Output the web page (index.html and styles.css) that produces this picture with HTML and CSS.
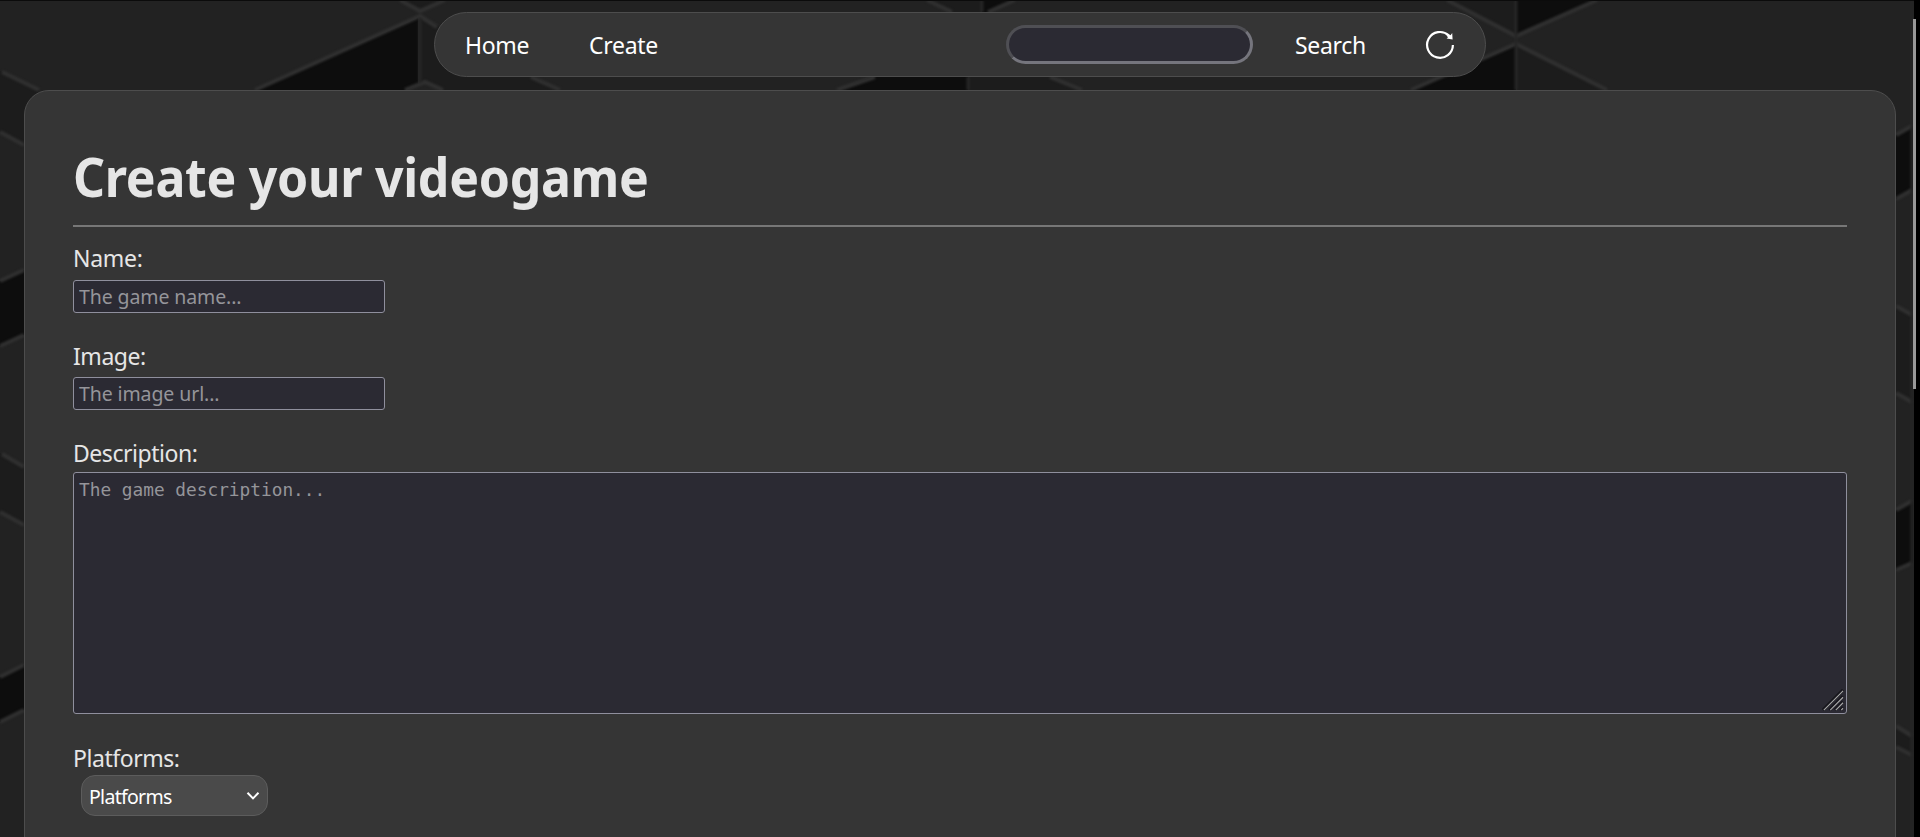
FILE: index.html
```html
<!DOCTYPE html>
<html lang="en">
<head>
<meta charset="utf-8">
<title>Create your videogame</title>
<link rel="stylesheet" href="styles.css">
</head>
<body>
<svg class="backdrop" viewBox="0 0 1920 837" aria-hidden="true">
  <rect width="1920" height="837" fill="#222"/>
  <g fill="#1c1c1c">
    <path d="M0 71L39 90V152L0 132zM0 453L24 466V525L0 512zM1896 306L1913 315V402L1896 393zM1896 726L1913 736V755L1896 747z"/>
    <path d="M400 0H445L420 11zM420 16L560 90H443L425 82L420 85zM927 0H982V30zM968 70H1035L1082 90H968zM1447 0H1515V36zM1517 44L1607 90H1517z"/>
  </g>
  <g fill="#0d0d0d">
    <path d="M0 281L24 270V335L0 346zM0 677L24 665V710L0 722zM1896 135L1913 126V190L1896 199zM1896 510L1913 501V563L1896 570z"/>
    <path d="M255 90L418 18V85L408 90zM837 90L890 70H968V90zM982 0H1015L982 15zM1516 0H1597L1516 36zM1411 90L1516 45V90z"/>
  </g>
  <g class="seams">
    <path d="M2 72L39 90M0 132L24 145M0 281L24 270M0 346L24 335M2 454L24 467M0 512L24 525M0 677L24 665M0 722L24 710"/>
    <path d="M1896 135L1912 126M1896 199L1912 190M1896 306L1912 315M1896 393L1912 402M1896 510L1912 501M1896 570L1912 563M1896 726L1912 736M1896 747L1912 755"/>
    <path d="M255 90L420 16L437 27M400 0L420 11L445 0M405 90L425 82L443 90M531 77L560 90M837 90L875 77M1050 77L1082 90M927 0L952 12M1015 0L988 12M1447 0L1516 36L1597 0M1411 90L1516 44L1607 90"/>
  </g>
  <path class="uprights" d="M420 18V83M968 77V90M982 0V12M1516 0V90M1912 0V837"/>
  <rect width="1920" height="1" fill="#0b0b0b"/>
  <rect x="1914" width="6" height="837" fill="#000"/>
  <rect x="1913" y="19" width="3" height="370" fill="#999"/>
</svg>
<div class="page">
  <nav class="nav">
    <a class="nav-home">Home</a>
    <a class="nav-create">Create</a>
    <input class="search" type="text" aria-label="Search">
    <a class="nav-search">Search</a>
    <svg class="reload" viewBox="0 0 30 30" aria-hidden="true">
      <path d="M27.9 15A12.9 12.9 0 1 1 23.7 5.4" fill="none" stroke="#fff" stroke-width="2.2"/>
      <path d="M27.2 3L27.6 9.4L21.6 8.6L23 7.2L21.5 5.4L23.8 4.2L25.5 5.2z" fill="#fff"/>
    </svg>
  </nav>
  <main class="card">
    <h1><span>Create your videogame</span></h1>
    <form>
      <div class="field"><label>Name:</label><input class="text" type="text" placeholder="The game name..."></div>
      <div class="field"><label class="tight">Image:</label><input class="text" type="text" placeholder="The image url..."></div>
      <div class="field description"><label class="tight">Description:</label>
        <div class="area"><textarea placeholder="The game description..."></textarea>
          <svg class="grip" viewBox="0 0 24 24" aria-hidden="true"><path d="M1 23L23 1M8 23L23 8M14 23L23 14M20 23L23 20" stroke="#17161c" stroke-width="3.4"/><path d="M2 23L23 2M9 23L23 9M15 23L23 15M21 23L23 21" stroke="#aaa" stroke-width="1.2"/></svg>
        </div>
      </div>
      <div class="field"><label class="tight">Platforms:</label>
        <div class="select"><span>Platforms</span><svg viewBox="0 0 14 10" aria-hidden="true"><path d="M1.5 1.8L7 7.4L12.5 1.8" fill="none" stroke="#fff" stroke-width="2"/></svg></div>
      </div>
    </form>
  </main>
</div>
</body>
</html>
```
FILE: styles.css
```css
* { box-sizing: border-box; }
html, body { margin: 0; height: 837px; overflow: hidden; background: #222; }
body { font-family: "Noto Sans", "Open Sans", sans-serif; color: #e6e6e6; }
.backdrop { position: absolute; inset: 0; width: 1920px; height: 837px; }
.seams { fill: none; stroke: #303030; stroke-width: 4; filter: blur(0.9px); }
.uprights { fill: none; stroke: #262626; stroke-width: 3; filter: blur(0.9px); }
.page { position: relative; height: 837px; padding: 12px 24px 0; display: flex; flex-direction: column; align-items: center; overflow: hidden; }
.nav { flex: none; width: 1052px; height: 65px; border: 1px solid #4d4d4d; border-radius: 33px; background: #353535; display: flex; align-items: center; padding: 0 30px; font-size: 23px; letter-spacing: -0.3px; color: #fff; }
.nav-home { width: 124px; }
.nav-search { width: 130px; }
.search { margin: 0 42px 0 auto; width: 247px; height: 39px; border: 3px solid; border-color: #4f4f54 #75757d #75757d #4f4f54; border-radius: 20px; background: #2b2a33; }
.reload { width: 30px; height: 30px; }
.card { flex: none; margin-top: 13px; width: 1872px; height: 900px; border: 1px solid #4d4d4d; border-radius: 25px; background: #353535; padding: 46px 48px 0; }
h1 { margin: 0 0 15px; height: 90px; border-bottom: 2px solid #777; font-size: 53px; line-height: 79px; white-space: nowrap; }
h1 span { display: inline-block; letter-spacing: -0.3px; transform: scaleX(0.943); transform-origin: 0 50%; }
.field { display: flex; flex-direction: column; height: 97px; }
.description { height: 305px; }
label { font-size: 23px; line-height: 32px; height: 38px; letter-spacing: -0.3px; }
.tight { line-height: 34px; letter-spacing: -0.45px; }
.text { width: 312px; height: 33px; border: 1px solid #8f8f9d; border-radius: 3px; background: #2b2a33; padding: 0 5px; font: 19.5px "Noto Sans", sans-serif; letter-spacing: -0.1px; }
::placeholder { color: #95959a; opacity: 1; }
.area { position: relative; height: 242px; margin-top: -2px; }
textarea { display: block; width: 100%; height: 100%; resize: none; border: 1px solid #8f8f9d; border-radius: 3px; background: #2b2a33; padding: 5px; font: 17.8px/23px "DejaVu Sans Mono", monospace; }
.grip { position: absolute; right: 3px; bottom: 3px; width: 22px; height: 22px; }
.select { width: 187px; height: 41px; margin: -4px 0 0 8px; border: 1px solid #5c5c5c; border-radius: 14px; background: #4a4a4a; display: flex; align-items: center; justify-content: space-between; padding: 0 7px; font-size: 19.5px; letter-spacing: -0.7px; color: #fff; }
.select span { padding-top: 1px; }
.select svg { width: 14px; height: 10px; }
```
